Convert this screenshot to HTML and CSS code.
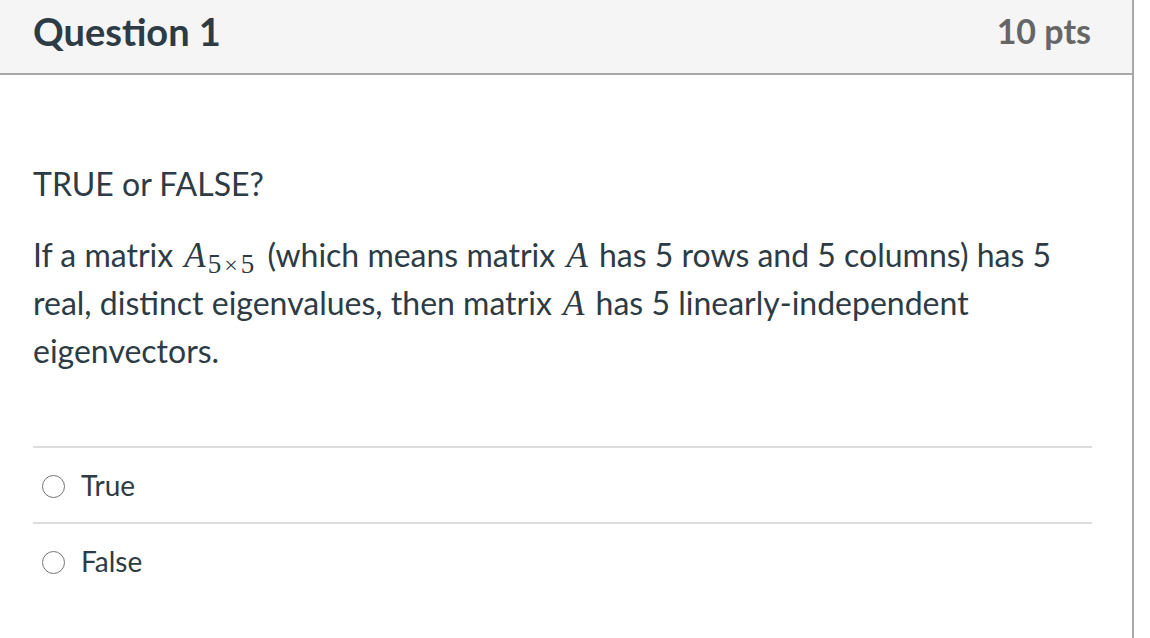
FILE: index.html
```html
<!DOCTYPE html>
<html lang="en">
<head>
<meta charset="utf-8">
<title>Question 1</title>
<link rel="stylesheet" href="styles.css">
</head>
<body>
<div class="question">
  <div class="header">
    <h2 class="title">Question 1</h2>
    <div class="pts">10 pts</div>
  </div>
  <div class="content">
    <p class="para first">TRUE or FALSE?</p>
    <p class="para">If a matrix <span class="math"><span class="mi">A</span><span class="sub">5<span class="times">×</span>5</span></span> (which means matrix <span class="math"><span class="mi">A</span></span> has 5 rows and 5 columns) has 5 real, distinct eigenvalues, then matrix <span class="math"><span class="mi">A</span></span> has 5 linearly-independent eigenvectors.</p>
    <div class="answers">
      <label class="answer"><span class="radio"></span><span class="label">True</span></label>
      <label class="answer"><span class="radio"></span><span class="label">False</span></label>
    </div>
  </div>
</div>
</body>
</html>
```
FILE: styles.css
```css
html, body {
  margin: 0;
  padding: 0;
  background: #ffffff;
}
body {
  font-family: Lato, "Liberation Sans", sans-serif;
  color: #2d3b45;
}
.question {
  width: 1132px;
  min-height: 638px;
  border-right: 2px solid #a8a8a8;
}
.header {
  display: flex;
  justify-content: space-between;
  align-items: flex-start;
  height: 75px;
  box-sizing: border-box;
  padding: 8px 41px 0 33px;
  background: #f5f5f5;
  border-bottom: 2px solid #a8a8a8;
}
.title {
  margin: 0;
  font-size: 38px;
  font-weight: 700;
  line-height: 46px;
  color: #2d3b45;
}
.pts {
  font-size: 34px;
  font-weight: 700;
  line-height: 46px;
  color: #666666;
}
.content {
  padding: 0 40px 0 33px;
}
.para {
  margin: 23px 0 0 0;
  font-size: 32px;
  line-height: 48px;
}
.para.first {
  margin-top: 85px;
}
.math {
  font-family: "Liberation Serif", serif;
  line-height: 0;
  margin: 0 3px;
}
.mi {
  font-style: italic;
  font-size: 35px;
}
.sub {
  font-size: 27px;
  vertical-align: -6px;
  line-height: 0;
  margin: 0 2px 0 2px;
}
.times {
  font-size: 24px;
  margin: 0 3px;
}
.answers {
  margin-top: 71px;
}
.answer {
  display: flex;
  align-items: center;
  height: 74px;
  border-top: 2px solid #dddddd;
  font-size: 28px;
}
.radio {
  width: 21px;
  height: 21px;
  border: 1.5px solid #747474;
  border-radius: 50%;
  margin: 2px 16px 0 9px;
  flex: none;
}
.label {
  line-height: 48px;
}
```
